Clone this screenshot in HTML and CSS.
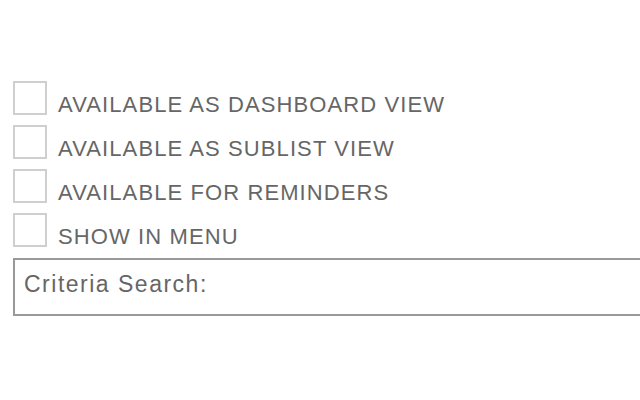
FILE: index.html
```html
<!DOCTYPE html>
<html>
<head>
<meta charset="utf-8">
<link rel="stylesheet" href="styles.css">
</head>
<body>
<div class="form">
  <div class="row"><span class="box"></span><span class="label">AVAILABLE AS DASHBOARD VIEW</span></div>
  <div class="row"><span class="box"></span><span class="label">AVAILABLE AS SUBLIST VIEW</span></div>
  <div class="row"><span class="box"></span><span class="label">AVAILABLE FOR REMINDERS</span></div>
  <div class="row"><span class="box"></span><span class="label">SHOW IN MENU</span></div>
  <div class="search"><span class="search-label">Criteria Search:</span></div>
</div>
</body>
</html>
```
FILE: styles.css
```css
html, body {
  margin: 0;
  padding: 0;
  background: #fff;
  overflow: hidden;
}
body {
  width: 640px;
  height: 400px;
  font-family: "Liberation Sans", Arial, Helvetica, sans-serif;
  color: #666;
}
.form {
  padding: 81px 0 0 13px;
  display: flex;
  flex-direction: column;
  overflow: hidden;
}
.row {
  display: flex;
  align-items: flex-end;
  height: 34px;
  margin-bottom: 10px;
}
.box {
  box-sizing: border-box;
  width: 34px;
  height: 34px;
  border: 2px solid #cfcfcf;
  background: #fff;
  flex: none;
}
.label {
  margin-left: 11px;
  font-size: 22px;
  line-height: 20px;
  letter-spacing: 1.1px;
  white-space: nowrap;
}
.search {
  margin-top: 1px;
  box-sizing: border-box;
  width: 640px;
  margin-right: -20px;
  height: 58px;
  border: 2px solid #999;
  border-right: none;
  padding: 13px 0 0 9px;
}
.search-label {
  font-size: 23px;
  line-height: 23px;
  letter-spacing: 1.5px;
  display: block;
}
```
